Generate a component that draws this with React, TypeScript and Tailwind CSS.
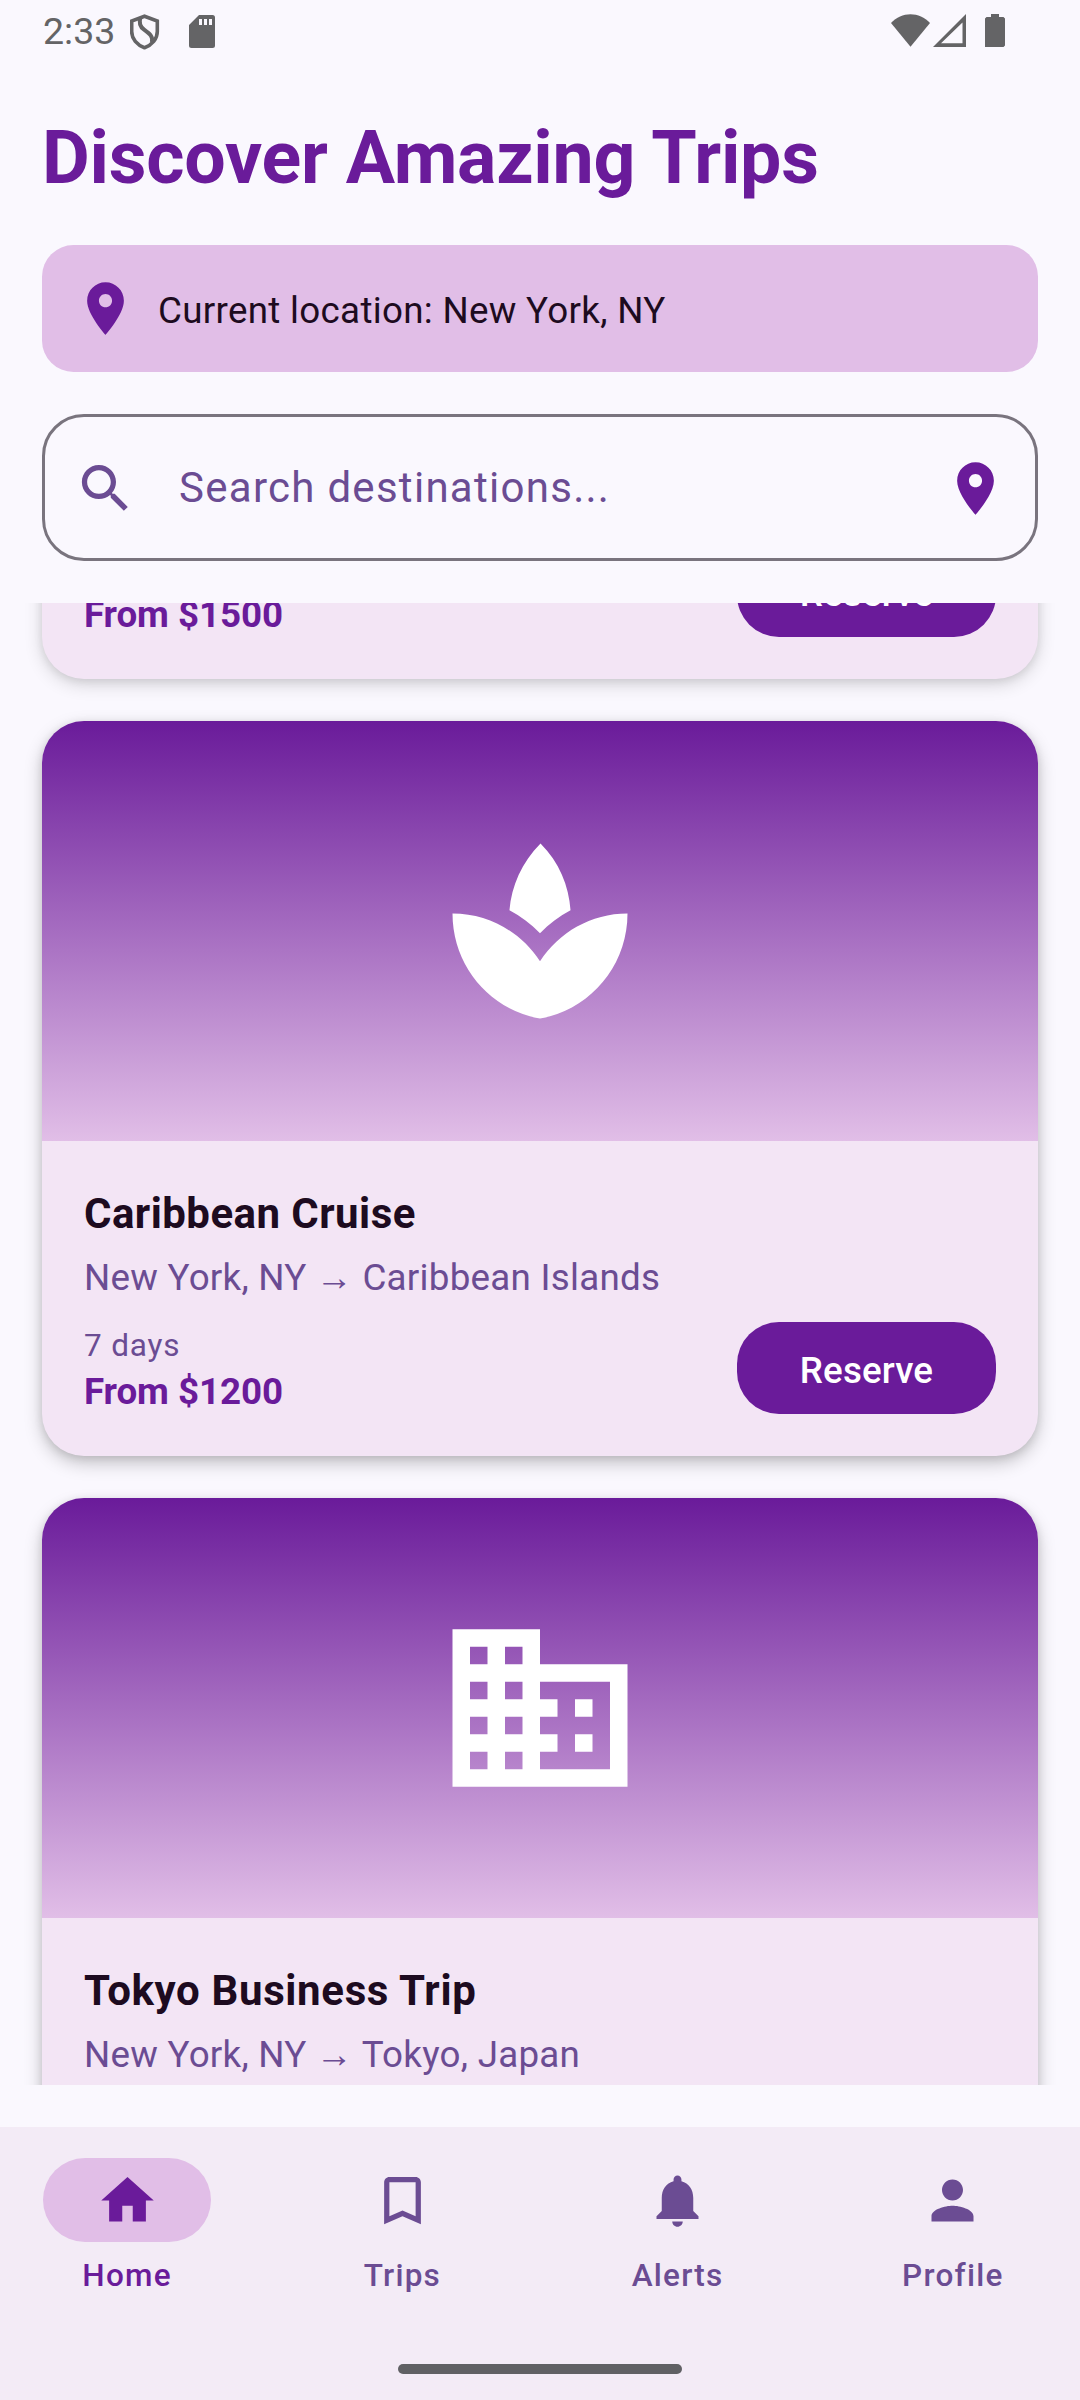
import type { ReactNode } from "react";

type IconProps = { d: string; className: string };

function Icon({ d, className }: IconProps) {
  return (
    <svg viewBox="0 0 24 24" className={className} fill="currentColor" aria-hidden="true">
      <path d={d} />
    </svg>
  );
}

const PIN =
  "M12 2C8.13 2 5 5.13 5 9c0 5.25 7 13 7 13s7-7.75 7-13c0-3.87-3.13-7-7-7zm0 9.5c-1.38 0-2.5-1.12-2.5-2.5s1.12-2.5 2.5-2.5 2.5 1.12 2.5 2.5-1.12 2.5-2.5 2.5z";
const SEARCH =
  "M15.5 14h-.79l-.28-.27C15.41 12.59 16 11.11 16 9.5 16 5.91 13.09 3 9.5 3S3 5.91 3 9.5 5.91 16 9.5 16c1.61 0 3.09-.59 4.23-1.57l.27.28v.79l5 4.99L20.49 19l-4.99-5zm-6 0C7.01 14 5 11.99 5 9.5S7.01 5 9.5 5 14 7.01 14 9.5 11.99 14 9.5 14z";
const SPA =
  "M15.49 9.63c-.18-2.79-1.31-5.51-3.43-7.63-2.14 2.14-3.32 4.86-3.55 7.63 1.28.68 2.46 1.56 3.49 2.63 1.03-1.06 2.21-1.94 3.49-2.63zM12 15.45C9.85 12.17 6.18 10 2 10c0 5.32 3.36 9.82 8.03 11.49.63.23 1.29.4 1.97.51.68-.12 1.33-.29 1.97-.51C18.64 19.82 22 15.32 22 10c-4.18 0-7.85 2.17-10 5.45z";
const BUSINESS =
  "M12 7V3H2v18h20V7H12zM6 19H4v-2h2v2zm0-4H4v-2h2v2zm0-4H4V9h2v2zm0-4H4V5h2v2zm4 12H8v-2h2v2zm0-4H8v-2h2v2zm0-4H8V9h2v2zm0-4H8V5h2v2zm10 12h-8v-2h2v-2h-2v-2h2v-2h-2V9h8v10zm-2-8h-2v2h2v-2zm0 4h-2v2h2v-2z";
const HOME = "M10 20v-6h4v6h5v-8h3L12 3 2 12h3v8z";
const BOOKMARK =
  "M17 3H7c-1.1 0-1.99.9-1.99 2L5 21l7-3 7 3V5c0-1.1-.9-2-2-2zm0 15l-5-2.18L7 18V5h10v13z";
const BELL =
  "M12 22c1.1 0 2-.9 2-2h-4c0 1.1.89 2 2 2zm6-6v-5c0-3.07-1.64-5.64-4.5-6.32V4c0-.83-.67-1.5-1.5-1.5s-1.5.67-1.5 1.5v.68C7.63 5.36 6 7.92 6 11v5l-2 2v1h16v-1l-2-2z";
const PERSON =
  "M12 12c2.21 0 4-1.79 4-4s-1.79-4-4-4-4 1.79-4 4 1.79 4 4 4zm0 2c-2.67 0-8 1.34-8 4v2h16v-2c0-2.66-5.33-4-8-4z";

function StatusBar() {
  return (
    <div className="flex h-[63px] shrink-0 justify-between pl-[43px] pr-[75px] text-[#646466]">
      <div className="flex">
        <span className="mt-[9px] w-[87px] text-[37.5px] leading-[44px]">2:33</span>
        <svg viewBox="0 0 30 36" className="mt-[13.5px] h-[36px] w-[30px]" fill="none" stroke="currentColor" strokeWidth="3.6" aria-hidden="true">
          <path d="M14.500 2.200 27.300 7v10.500c0 7.500-5.300 13.600-12.800 16.200C7 31.100 1.700 25 1.700 17.500V7z" />
          <path d="M10.500 3.500c-1.800 5.500-.8 9 3.600 12.200 6.400 4.600 9 7 7.800 12.500" strokeWidth="4" />
        </svg>
        <svg viewBox="0 0 26 33" className="ml-[29px] mt-[15px] h-[33px] w-[26px]" aria-hidden="true">
          <path d="M10 0H23.500A2.500 2.500 0 0 1 26 2.500V30.500A2.500 2.500 0 0 1 23.500 33H2.500A2.500 2.500 0 0 1 0 30.500V10z" fill="currentColor" />
          <path d="M10 4h3v6h-3zM15 4h3v6h-3zM20 4h3v6h-3z" fill="#faf8fe" />
        </svg>
      </div>
      <div className="flex pt-[14px]">
        <svg viewBox="0 0 39 33" className="h-[33px] w-[39px]" fill="currentColor" aria-hidden="true">
          <path d="M0 9C10.500-2.800 28.500-2.800 39 9L19.500 32.800z" />
        </svg>
        <svg viewBox="0 0 33 33" className="ml-[3px] h-[33px] w-[33px]" fill="currentColor" fillRule="evenodd" aria-hidden="true">
          <path d="M33 0V33H0zM29.500 8.500 8 29.300H29.500z" />
        </svg>
        <svg viewBox="0 0 20 33" className="ml-[19px] h-[33px] w-[20px]" fill="currentColor" aria-hidden="true">
          <path d="M6 0h8v3h4.500L20 4.500V31.500L18.500 33H0V4.500L1.500 3H6z" />
        </svg>
      </div>
    </div>
  );
}

type Trip = {
  title: string;
  titleTracking: string;
  to: string;
  days: string;
  price: string;
  icon: string;
  shadow: string;
};

const trips: Trip[] = [
  {
    title: "Caribbean Cruise",
    titleTracking: "tracking-[0.45px]",
    to: "Caribbean Islands",
    days: "7 days",
    price: "From $1200",
    icon: SPA,
    shadow: "shadow-[0_7px_18px_rgba(0,0,0,0.22),0_2px_8px_rgba(0,0,0,0.10)]",
  },
  {
    title: "Tokyo Business Trip",
    titleTracking: "tracking-[0.65px]",
    to: "Tokyo, Japan",
    days: "5 days",
    price: "From $2000",
    icon: BUSINESS,
    shadow: "shadow-[0_9px_18px_rgba(0,0,0,0.22),0_2px_8px_rgba(0,0,0,0.10)]",
  },
];

function TripFooter({ days, price }: { days?: string; price: string }) {
  return (
    <div className="flex h-[95px] items-end justify-between">
      <div>
        {days && <p className="-mb-[2px] text-[31.5px] leading-[42px] tracking-[0.85px] text-[#6b4c93]">{days}</p>}
        <p className="-mb-[4px] text-[36.75px] font-bold leading-[53px] tracking-[-0.08px] text-[#6a1b9a]">{price}</p>
      </div>
      <button className="h-[92px] w-[259px] rounded-[42px] bg-[#6a1b9a] pt-[4px] text-[36.75px] font-medium leading-[53px] tracking-[0.14px] text-white">
        Reserve
      </button>
    </div>
  );
}

function TripCard({ trip }: { trip: Trip }) {
  return (
    <article className={`h-[735px] shrink-0 overflow-hidden rounded-[42px] bg-[#f3e5f5] ${trip.shadow}`}>
      <div className="flex h-[420px] items-center justify-center bg-linear-to-b/srgb from-[#6a1b9a] to-[#e1bee7]">
        <Icon d={trip.icon} className="size-[210px] text-white" />
      </div>
      <div className="px-[42px] pt-[41px]">
        <h2 className={`text-[42px] font-bold leading-[63px] text-[#1d0b20] ${trip.titleTracking}`}>{trip.title}</h2>
        <p className="mb-[15px] mt-[6px] flex h-[53px] whitespace-pre text-[36.75px] leading-[53px] tracking-[0.26px] text-[#6b4c93]">
          <span>New York, NY </span>
          <span>→</span>
          <span> {trip.to}</span>
        </p>
        <TripFooter days={trip.days} price={trip.price} />
      </div>
    </article>
  );
}

function NavItem({ label, icon, active = false }: { label: string; icon: ReactNode; active?: boolean }) {
  return (
    <a className={`flex flex-1 flex-col items-center ${active ? "text-[#6a1b9a]" : "text-[#6b4c93]"}`}>
      <span className={`flex h-[84px] w-[168px] items-center justify-center rounded-full ${active ? "bg-[#e1bee7]" : ""}`}>
        {icon}
      </span>
      <span className="mt-[13px] text-[31.5px] font-medium leading-[42px] tracking-[1.25px]">{label}</span>
    </a>
  );
}

export default function App() {
  return (
    <div className="flex h-[2400px] w-[1080px] flex-col overflow-hidden bg-[#faf8fe] font-['Roboto',sans-serif]">
      <StatusBar />
      <header className="flex shrink-0 flex-col px-[42px] pt-[48px]">
        <h1 className="h-[95px] text-[73.5px] font-bold leading-[95px] tracking-[-0.24px] text-[#6a1b9a]">
          Discover Amazing Trips
        </h1>
        <div className="mt-[39px] flex h-[127px] items-center gap-[21px] rounded-[31.5px] bg-[#e1bee7] px-[31.5px]">
          <Icon d={PIN} className="size-[63px] text-[#6a1b9a]" />
          <span className="pl-[0.5px] pt-[3px] text-[36.75px] leading-[53px] tracking-[0.3px] text-[#1d0b20]">
            Current location: New York, NY
          </span>
        </div>
        <div className="mt-[42px] flex h-[147px] items-center rounded-[42px] border-[3px] border-[#79747e] px-[28.5px] pt-[1px]">
          <Icon d={SEARCH} className="size-[63px] text-[#6b4c93]" />
          <span className="ml-[42.5px] flex-1 pb-[2px] text-[42px] leading-[63px] tracking-[1.28px] text-[#6b4c93]">
            Search destinations...
          </span>
          <Icon d={PIN} className="size-[63px] text-[#6a1b9a]" />
        </div>
      </header>
      <main className="mt-[42px] flex h-[1482px] shrink-0 flex-col gap-[42px] overflow-hidden px-[42px]">
        {/* Tail of the card that is scrolled under the header */}
        <article className="-mt-[124px] flex h-[200px] shrink-0 flex-col justify-end rounded-b-[42px] bg-[#f3e5f5] px-[42px] pb-[42px] shadow-[0_5px_18px_rgba(0,0,0,0.16),0_2px_8px_rgba(0,0,0,0.08)]">
          <TripFooter price="From $1500" />
        </article>
        {trips.map((trip) => (
          <TripCard key={trip.title} trip={trip} />
        ))}
      </main>
      <footer className="mt-[42px] flex h-[273px] shrink-0 flex-col items-center bg-[#f3ebf6] pt-[31px]">
        <nav className="flex w-full gap-[21px]">
          <NavItem active label="Home" icon={<Icon d={HOME} className="size-[63px]" />} />
          <NavItem label="Trips" icon={<Icon d={BOOKMARK} className="size-[63px]" />} />
          <NavItem label="Alerts" icon={<Icon d={BELL} className="size-[63px]" />} />
          <NavItem label="Profile" icon={<Icon d={PERSON} className="size-[63px]" />} />
        </nav>
        <div className="mt-[67px] h-[10px] w-[284px] rounded-full bg-[#606064]" />
      </footer>
    </div>
  );
}
